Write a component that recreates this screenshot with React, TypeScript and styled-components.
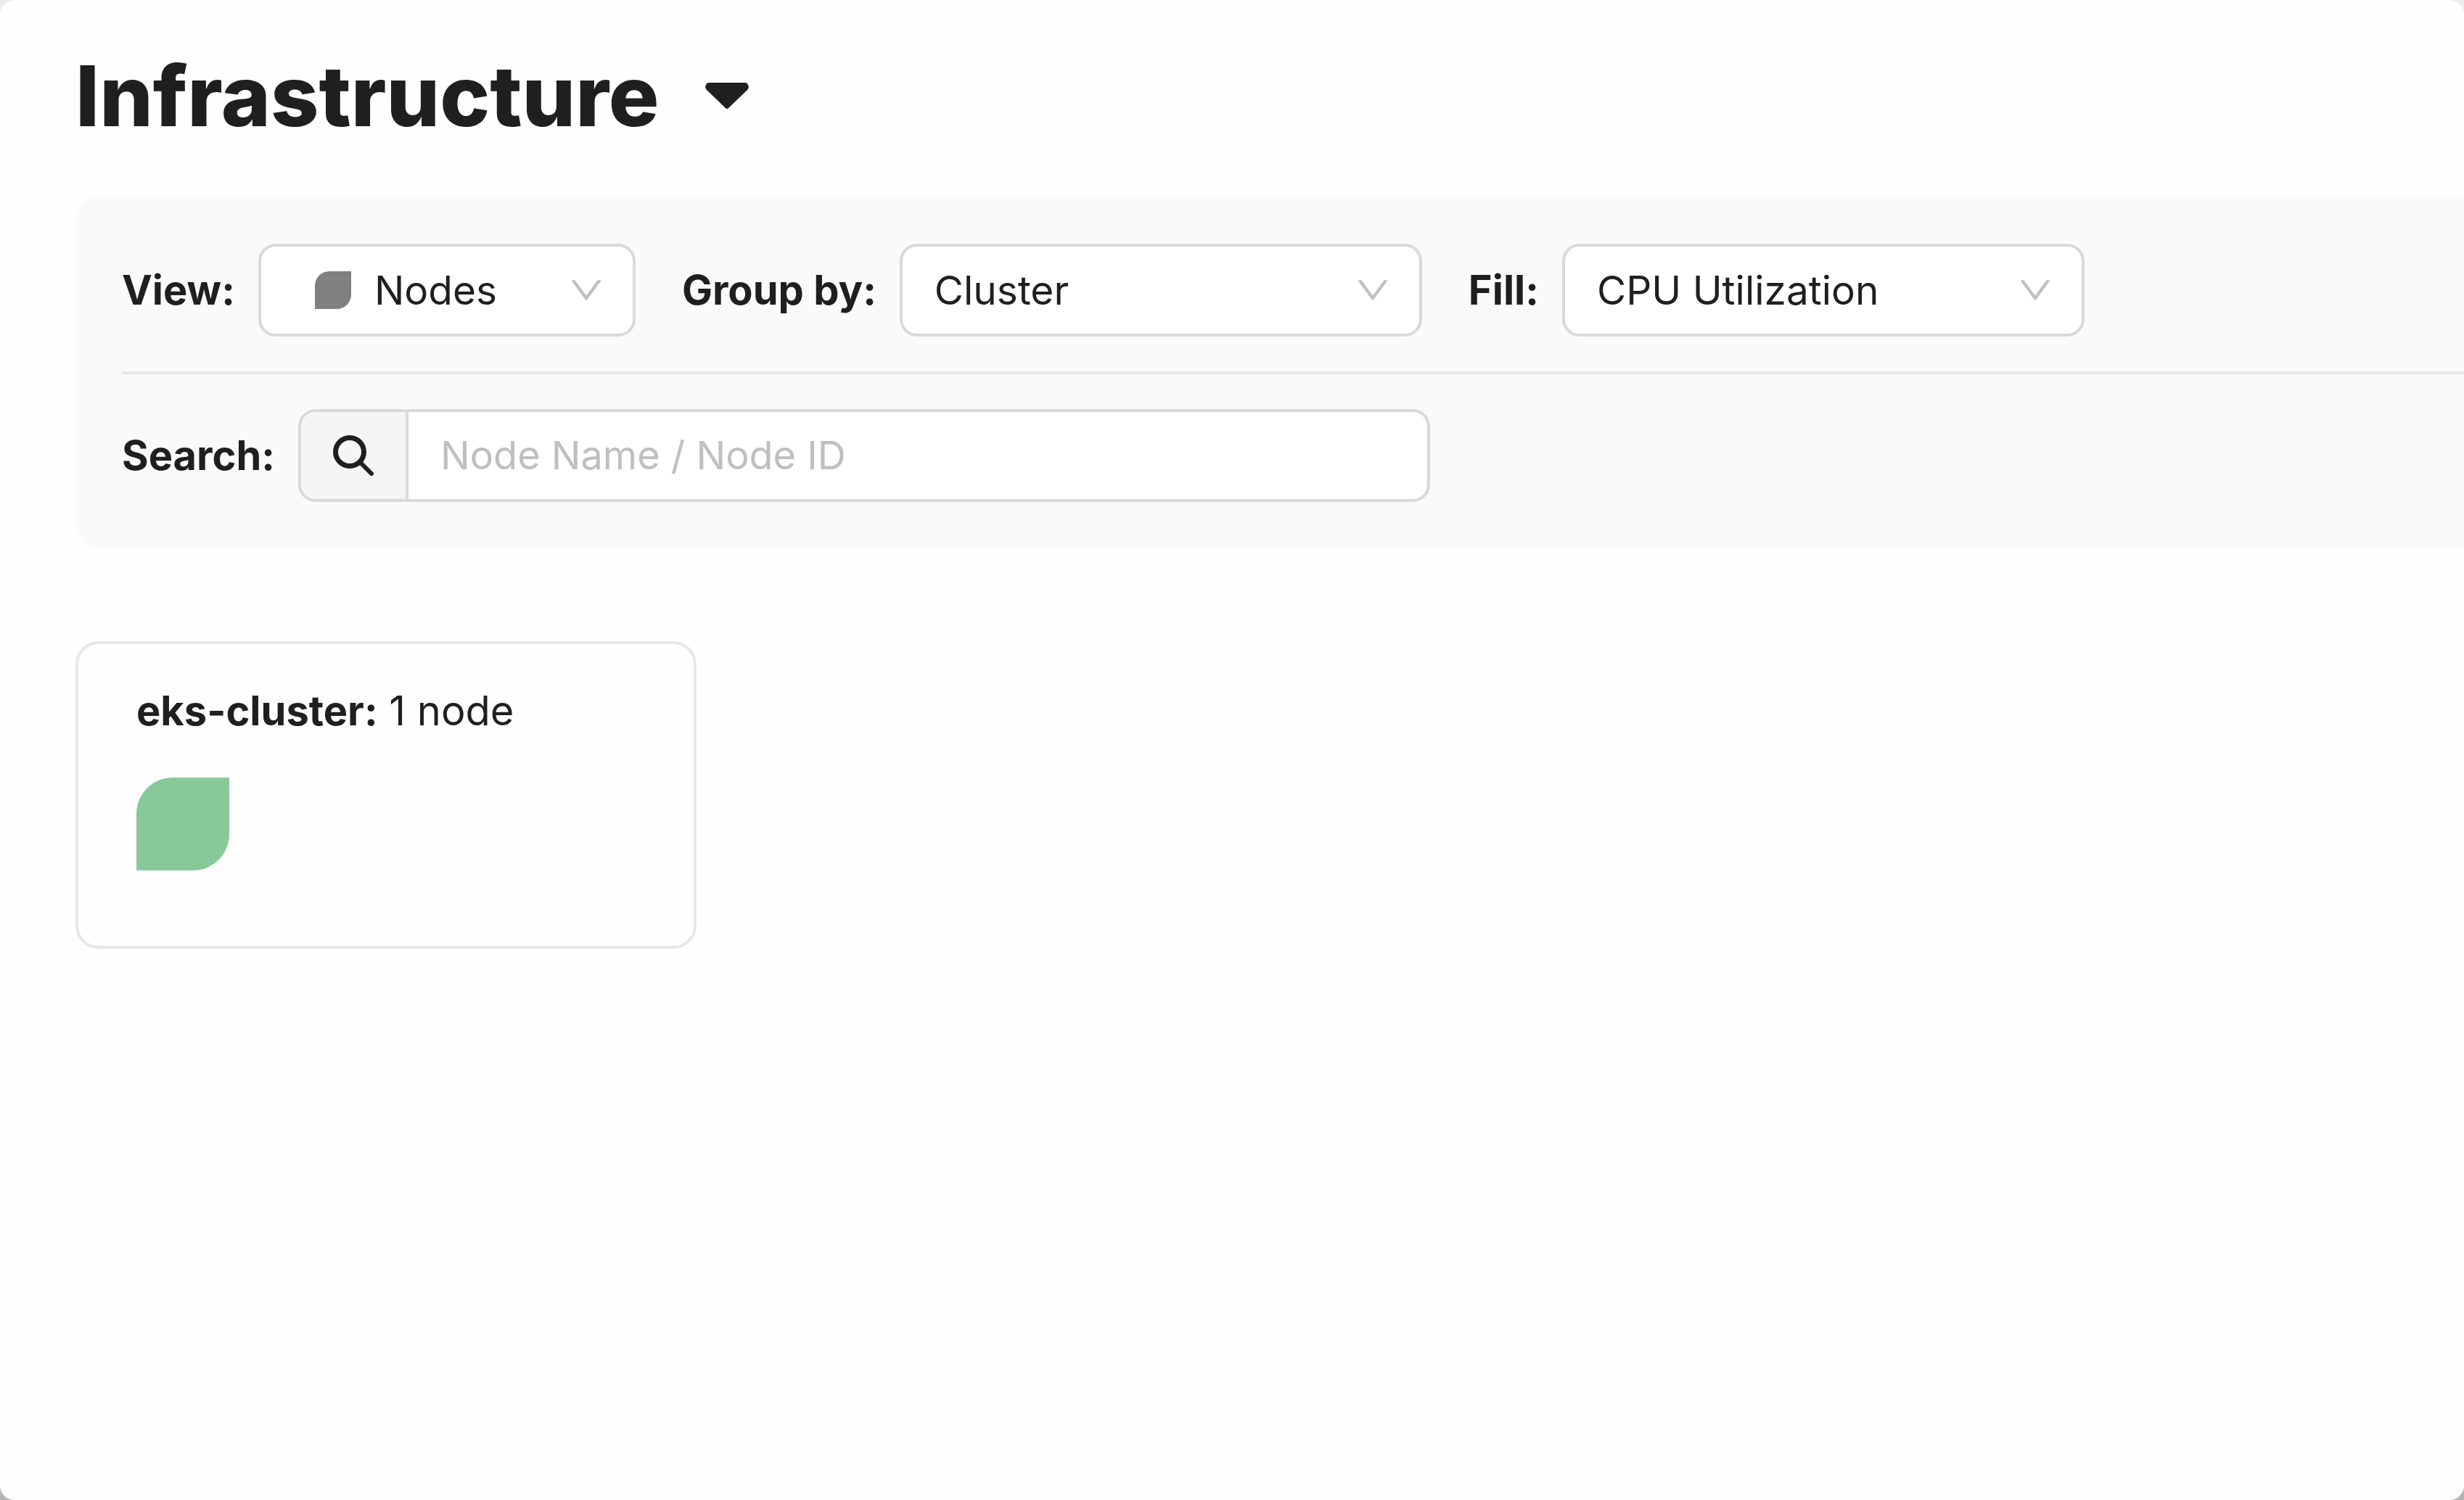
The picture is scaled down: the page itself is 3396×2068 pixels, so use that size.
import React from "react";
import styled, { createGlobalStyle } from "styled-components";

const GlobalStyle = createGlobalStyle`
  *, *::before, *::after { box-sizing: border-box; }
  body {
    margin: 0;
    background: linear-gradient(#ececec, #b4b4b4);
    font-family: Inter, "Liberation Sans", sans-serif;
    color: #1f1f1f;
  }
`;

const Page = styled.main`
  min-height: 100vh;
  padding: 72px 0 72px 104px;
  border-radius: 20px;
  background: #fefefe;
  font-size: 56px;
  line-height: 88px;
`;

const Title = styled.h1`
  display: flex;
  margin: 0 0 80px;
  font-size: 116px;
  line-height: 120px;
  font-weight: 800;
`;

const TitleButton = styled.button`
  display: flex;
  align-items: center;
  gap: 64px;
  padding: 0;
  border: 0;
  background: none;
  color: inherit;
  font: inherit;
  cursor: pointer;
`;

const Filters = styled.form`
  padding: 64px 0 64px 64px;
  border-radius: 32px 0 0 32px;
  background: #fafafa;
`;

const FilterRow = styled.div`
  display: flex;
  flex-wrap: wrap;
  gap: 32px 64px;

  & + & {
    margin-top: 48px;
    padding-top: 48px;
    border-top: 4px solid #e5e7eb;
  }
`;

const Field = styled.div`
  display: flex;
  align-items: center;
  gap: 32px;
`;

const Label = styled.label`
  font-weight: 700;
`;

const SelectBox = styled.div<{ $width: number }>`
  display: grid;
  align-items: center;
  width: ${(p) => p.$width}px;
  height: 128px;

  & > * {
    grid-area: 1 / 1;
  }
`;

const Select = styled.select<{ $indent: number }>`
  width: 100%;
  height: 128px;
  padding: 0 96px 0 ${(p) => p.$indent}px;
  border: 4px solid #d9d9d9;
  border-radius: 24px;
  background: #fff;
  color: inherit;
  font: inherit;
  font-size: 55px;
  appearance: none;
`;

const Arrow = styled.svg`
  justify-self: end;
  width: 48px;
  height: 48px;
  margin-right: 44px;
  pointer-events: none;
`;

const SelectLeaf = styled.span`
  z-index: 1;
  width: 50px;
  height: 52px;
  margin-left: 78px;
  border-radius: 20px 0;
  background: #808080;
  pointer-events: none;
`;

const SearchBox = styled.div`
  display: flex;
  width: 1560px;
  height: 128px;
  border: 4px solid #d9d9d9;
  border-radius: 24px;
  background: #fff;
  overflow: hidden;
`;

const SearchButton = styled.button`
  display: grid;
  place-items: center;
  width: 148px;
  padding: 0;
  border: 0;
  border-right: 4px solid #d9d9d9;
  background: #f5f5f5;
  color: inherit;
`;

const SearchInput = styled.input`
  flex: 1;
  min-width: 0;
  padding: 0 44px;
  border: 0;
  outline: 0;
  background: none;
  color: inherit;
  font: inherit;
  font-size: 54px;

  &::placeholder {
    color: #bfbfbf;
    opacity: 1;
  }
`;

const Clusters = styled.section`
  display: flex;
  flex-wrap: wrap;
  gap: 64px;
  margin-top: 128px;
`;

const ClusterCard = styled.article`
  width: 856px;
  padding: 48px 80px 104px;
  border: 4px solid #e5e7eb;
  border-radius: 32px;
`;

const ClusterName = styled.p`
  margin: 0 0 48px;

  strong {
    font-weight: 700;
  }
`;

const NodeTile = styled.button`
  display: block;
  width: 128px;
  height: 128px;
  padding: 0;
  border: 0;
  border-radius: 50px 0;
  background: #87c998;
`;

type FilterSelectProps = {
  id: string;
  label: string;
  options: string[];
  width: number;
  leaf?: boolean;
};

function FilterSelect({ id, label, options, width, leaf = false }: FilterSelectProps) {
  return (
    <Field>
      <Label htmlFor={id}>{label}</Label>
      <SelectBox $width={width}>
        <Select id={id} $indent={leaf ? 156 : 44}>
          {options.map((option) => (
            <option key={option}>{option}</option>
          ))}
        </Select>
        {leaf && <SelectLeaf />}
        <Arrow viewBox="64 64 896 896" fill="#bfbfbf" aria-hidden="true">
          <path d="M884 256h-75c-5.100 0-9.900 2.500-12.900 6.600L512 654.200 227.900 262.600c-3-4.100-7.800-6.600-12.900-6.600h-75c-6.500 0-10.300 7.400-6.500 12.700l352.600 486.100c12.800 17.600 39 17.600 51.700 0l352.600-486.100c3.900-5.300.1-12.700-6.400-12.700z" />
        </Arrow>
      </SelectBox>
    </Field>
  );
}

export default function App() {
  return (
    <>
      <GlobalStyle />
      <Page>
        <Title>
          <TitleButton type="button">
            Infrastructure
            <svg width="60" height="36" viewBox="0 0 60 36" fill="currentColor" aria-hidden="true">
              <path d="M5 0H55Q58 0 59 3Q61 7 58 10L32 35Q30 37 28 35L2 10Q-1 7 1 3Q2 0 5 0Z" />
            </svg>
          </TitleButton>
        </Title>

        <Filters onSubmit={(event) => event.preventDefault()}>
          <FilterRow>
            <FilterSelect id="view" label="View:" options={["Nodes"]} width={520} leaf />
            <FilterSelect id="group" label="Group by:" options={["Cluster"]} width={720} />
            <FilterSelect id="fill" label="Fill:" options={["CPU Utilization"]} width={720} />
          </FilterRow>
          <FilterRow>
            <Field>
              <Label htmlFor="search">Search:</Label>
              <SearchBox>
                <SearchButton type="submit" aria-label="Search">
                  <svg width="56" height="56" viewBox="0 0 56 56" fill="none" stroke="currentColor" strokeWidth="7" strokeLinecap="round" aria-hidden="true">
                    <circle cx="23" cy="23" r="19.500" />
                    <path d="M38 38 53 53" strokeWidth="6" />
                  </svg>
                </SearchButton>
                <SearchInput id="search" type="text" placeholder="Node Name / Node ID" />
              </SearchBox>
            </Field>
          </FilterRow>
        </Filters>

        <Clusters>
          <ClusterCard>
            <ClusterName>
              <strong>eks-cluster:</strong> 1 node
            </ClusterName>
            <NodeTile type="button" aria-label="Node" />
          </ClusterCard>
        </Clusters>
      </Page>
    </>
  );
}
